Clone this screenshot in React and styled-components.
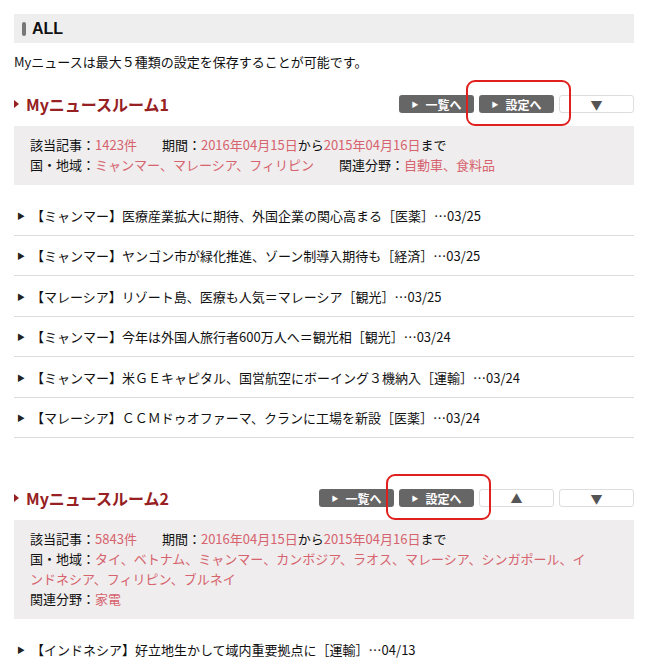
import React from "react";
import styled, { createGlobalStyle } from "styled-components";

const rooms = [
    {
        title: "Myニュースルーム1",
        count: "1423",
        from: "2016年04月15日",
        to: "2015年04月16日",
        countries: ["ミャンマー", "マレーシア", "フィリピン"],
        fields: ["自動車", "食料品"],
        up: false,
        news: [
            "【ミャンマー】医療産業拡大に期待、外国企業の関心高まる［医薬］…03/25",
            "【ミャンマー】ヤンゴン市が緑化推進、ゾーン制導入期待も［経済］…03/25",
            "【マレーシア】リゾート島、医療も人気＝マレーシア［観光］…03/25",
            "【ミャンマー】今年は外国人旅行者600万人へ＝観光相［観光］…03/24",
            "【ミャンマー】米ＧＥキャピタル、国営航空にボーイング３機納入［運輸］…03/24",
            "【マレーシア】ＣＣＭドゥオファーマ、クランに工場を新設［医薬］…03/24",
        ],
    },
    {
        title: "Myニュースルーム2",
        count: "5843",
        from: "2016年04月15日",
        to: "2015年04月16日",
        countries: ["タイ", "ベトナム", "ミャンマー", "カンボジア", "ラオス", "マレーシア", "シンガポール", "インドネシア", "フィリピン", "ブルネイ"],
        fields: ["家電"],
        up: true,
        news: [
            "【インドネシア】好立地生かして域内重要拠点に［運輸］…04/13",
        ],
    },
];

const App = () => {
    return (
        <Page>
            <GlobalStyle />
            <SectionBar>
                <Marker />
                ALL
            </SectionBar>
            <Note>Myニュースは最大５種類の設定を保存することが可能です。</Note>
            {rooms.map((room, i) => (
                <Room key={i}>
                    <RoomHead>
                        <RoomTitle>{room.title}</RoomTitle>
                        <Buttons>
                            <DarkButton>
                                <Tri>▶</Tri>一覧へ
                            </DarkButton>
                            <Highlighted>
                                <DarkButton>
                                    <Tri>▶</Tri>設定へ
                                </DarkButton>
                                <Ring />
                            </Highlighted>
                            {room.up && <LightButton>▲</LightButton>}
                            <LightButton>▼</LightButton>
                        </Buttons>
                    </RoomHead>
                    <InfoBox>
                        <Item>
                            該当記事：<Value>{room.count}件</Value>
                        </Item>
                        <Item>
                            期間：<Value>{room.from}</Value>から<Value>{room.to}</Value>まで
                        </Item>
                        <Item>
                            国・地域：<Value>{room.countries.join("、")}</Value>
                        </Item>
                        <Item>
                            関連分野：<Value>{room.fields.join("、")}</Value>
                        </Item>
                    </InfoBox>
                    <NewsList>
                        {room.news.map((n, j) => (
                            <NewsRow key={j}>
                                <Bullet>▶</Bullet>
                                {n}
                            </NewsRow>
                        ))}
                    </NewsList>
                </Room>
            ))}
        </Page>
    );
};

const GlobalStyle = createGlobalStyle`
    body {
        margin: 0;
        background: #fff;
        font-family: "Noto Sans CJK JP", "DejaVu Sans", sans-serif;
        color: #111;
    }
`;

const Page = styled.div`
    width: 620px;
    padding: 14px 16px 0 14px;
`;

const SectionBar = styled.div`
    display: flex;
    align-items: center;
    height: 29px;
    background: #efeeee;
    font-family: "Liberation Sans", sans-serif;
    font-weight: bold;
    font-size: 16px;
    color: #111;
    padding-left: 8px;
`;

const Marker = styled.span`
    width: 4px;
    height: 14px;
    border-radius: 2px;
    background: #777;
    margin-right: 6px;
`;

const Note = styled.p`
    margin: 9px 0 0;
    font-size: 13px;
    line-height: 20px;
`;

const Room = styled.div`
    margin-top: 19px;
    & + & {
        margin-top: 47px;
    }
`;

const RoomHead = styled.div`
    display: flex;
    align-items: center;
    justify-content: space-between;
    height: 26px;
`;

const RoomTitle = styled.h2`
    margin: 0;
    display: flex;
    align-items: center;
    font-size: 16px;
    font-weight: bold;
    color: #962022;
    &::before {
        content: "";
        border-left: 5px solid #962022;
        border-top: 4px solid transparent;
        border-bottom: 4px solid transparent;
        margin-right: 7px;
    }
`;

const Buttons = styled.div`
    display: flex;
    gap: 5px;
`;

const DarkButton = styled.div`
    width: 75px;
    height: 18px;
    box-sizing: border-box;
    display: flex;
    align-items: center;
    justify-content: center;
    background: #666;
    border-radius: 3px;
    color: #fff;
    font-size: 12px;
    font-weight: bold;
`;

const Tri = styled.span`
    font-size: 7px;
    margin-right: 7px;
`;

const LightButton = styled.div`
    width: 75px;
    height: 18px;
    box-sizing: border-box;
    display: flex;
    align-items: center;
    justify-content: center;
    border: 1px solid #ddd;
    border-radius: 3px;
    color: #555;
    font-size: 12px;
`;

const Highlighted = styled.div`
    position: relative;
`;

const Ring = styled.div`
    position: absolute;
    left: -13px;
    top: -15px;
    right: -17px;
    bottom: -13px;
    border: 2px solid #e0201e;
    border-radius: 9px;
`;

const InfoBox = styled.div`
    margin-top: 9px;
    background: #efeded;
    padding: 9px 16px 10px;
    font-size: 13px;
    line-height: 20px;
`;

const Item = styled.span`
    display: inline-block;
    max-width: 100%;
    margin-right: 25px;
    vertical-align: top;
`;

const Value = styled.span`
    color: #d6636d;
`;

const NewsList = styled.div`
    margin-top: 10px;
`;

const NewsRow = styled.div`
    display: flex;
    align-items: center;
    height: 40.5px;
    box-sizing: border-box;
    padding-top: 1px;
    border-bottom: 1px solid #dcdcdc;
    font-size: 13px;
`;

const Bullet = styled.span`
    font-size: 8px;
    color: #222;
    margin: 0 6px 0 3px;
`;

export default App;
